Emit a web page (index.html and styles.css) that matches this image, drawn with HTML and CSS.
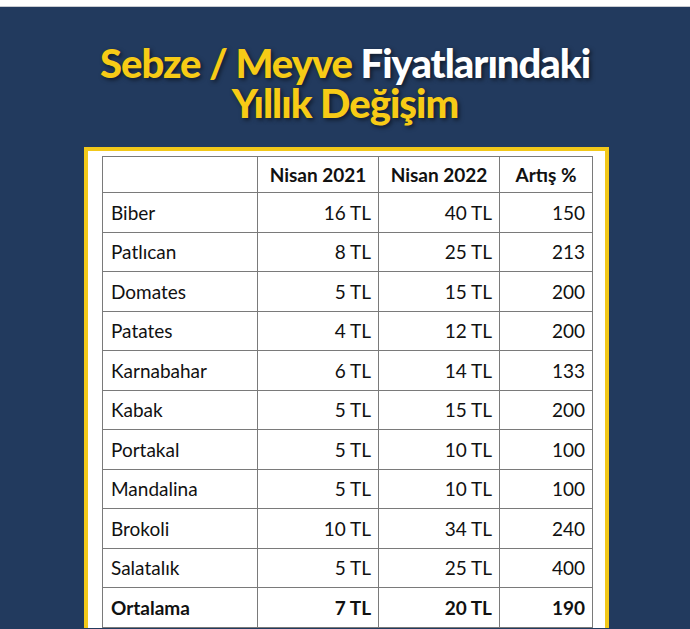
FILE: index.html
```html
<!DOCTYPE html>
<html lang="tr">
<head>
<meta charset="utf-8">
<title>Sebze / Meyve Fiyatlarındaki Yıllık Değişim</title>
<link rel="stylesheet" href="styles.css">
</head>
<body>
<div class="topbar"></div>
<main class="poster">
  <h1 class="title">
    <span class="line"><span class="yellow">Sebze / Meyve</span> <span class="white">Fiyatlarındaki</span></span>
    <span class="line"><span class="yellow">Yıllık Değişim</span></span>
  </h1>
  <div class="frame">
    <table class="prices">
      <colgroup>
        <col class="c-name"><col class="c-num"><col class="c-num"><col class="c-pct">
      </colgroup>
      <thead>
        <tr><th></th><th>Nisan 2021</th><th>Nisan 2022</th><th>Artış %</th></tr>
      </thead>
      <tbody>
        <tr><td>Biber</td><td>16 TL</td><td>40 TL</td><td>150</td></tr>
        <tr><td>Patlıcan</td><td>8 TL</td><td>25 TL</td><td>213</td></tr>
        <tr><td>Domates</td><td>5 TL</td><td>15 TL</td><td>200</td></tr>
        <tr><td>Patates</td><td>4 TL</td><td>12 TL</td><td>200</td></tr>
        <tr><td>Karnabahar</td><td>6 TL</td><td>14 TL</td><td>133</td></tr>
        <tr><td>Kabak</td><td>5 TL</td><td>15 TL</td><td>200</td></tr>
        <tr><td>Portakal</td><td>5 TL</td><td>10 TL</td><td>100</td></tr>
        <tr><td>Mandalina</td><td>5 TL</td><td>10 TL</td><td>100</td></tr>
        <tr><td>Brokoli</td><td>10 TL</td><td>34 TL</td><td>240</td></tr>
        <tr><td>Salatalık</td><td>5 TL</td><td>25 TL</td><td>400</td></tr>
        <tr class="total"><td>Ortalama</td><td>7 TL</td><td>20 TL</td><td>190</td></tr>
      </tbody>
    </table>
  </div>
</main>
</body>
</html>
```
FILE: styles.css
```css
html, body {
  margin: 0;
  padding: 0;
  background: #223a5e;
  overflow: hidden;
}
.topbar {
  height: 7px;
  background: #ffffff;
  border-bottom: 1px solid #c9ccd2;
  box-sizing: border-box;
}
.poster {
  background: #223a5e;
  padding-top: 36px;
  height: 700px;
}
.title {
  margin: 0;
  text-align: center;
  font-family: "Lato", sans-serif;
  font-weight: 900;
  font-size: 40px;
  line-height: 40px;
  letter-spacing: -1px;
  text-shadow: 2px 2px 4px rgba(0, 0, 0, 0.55);
}
.title .line {
  display: block;
}
.yellow { color: #f7cb16; }
.white { color: #ffffff; }
.frame {
  box-sizing: border-box;
  margin: 24px 0 0 84px;
  width: 525px;
  border: 4px solid #f2c81a;
  border-bottom: none;
  background: #ffffff;
  padding: 5px 13px 0 14px;
}
.prices {
  border-collapse: collapse;
  table-layout: fixed;
  width: 490px;
  font-family: "Lato", sans-serif;
  font-size: 19px;
  color: #111111;
}
.c-name { width: 155px; }
.c-num { width: 121px; }
.c-pct { width: 93px; }
.prices th, .prices td {
  border: 1px solid #7a7a7a;
  height: 38px;
  padding: 0 7px;
  box-sizing: border-box;
}
.prices th {
  font-weight: 700;
  text-align: center;
  height: 36px;
}
.prices td { text-align: right; }
.prices td:first-child { text-align: left; padding-left: 8px; }
.prices tbody tr { height: 39.5px; }
.prices .total td { font-weight: 700; }
```
